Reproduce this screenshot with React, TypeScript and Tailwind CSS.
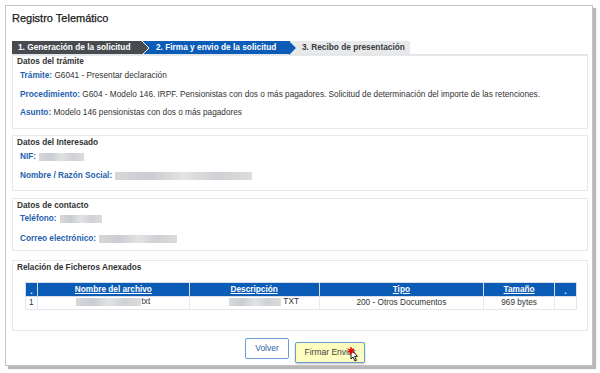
import React from "react";

const Blur = ({ w }: { w: number }) => (
  <span
    className="inline-block h-[8px] align-middle bg-[linear-gradient(90deg,#d8d8d8,#c9ccd2,#e2e2e2,#cfd1d5,#dcdcdc)] blur-[0.6px]"
    style={{ width: w }}
  />
);

export default function App() {
  const font = { fontFamily: '"Liberation Sans", Arial, sans-serif' };
  return (
    <div className="w-[600px] h-[373px] bg-white pt-[5px] pl-[5px]" style={font}>
      <div className="w-[588px] h-[361px] border border-[#c4c4c4] bg-white shadow-[3px_3px_1px_rgba(0,0,0,0.28)] flex flex-col pl-[6px] pr-[2px]">
        <div className="h-[35px] pt-[5px] text-[11px] leading-[14px] text-[#1a1a1a] [-webkit-text-stroke:0.25px_#1a1a1a]">Registro Telemático</div>
        {/* Steps */}
        <div className="flex h-[14px] border-b border-[#e4e4e4] mr-[2px] text-[8.3px] font-bold">
          <div className="bg-[#474a4f] text-white pl-[6px] w-[131px] flex items-center relative">
            1. Generación de la solicitud
            <svg className="absolute right-[-7px] top-0 z-10" width="8" height="14" viewBox="0 0 8 14">
              <polygon points="0,0 7,7 0,14" fill="#474a4f" />
              <polyline points="0,0 7,7 0,14" fill="none" stroke="#fff" strokeWidth="1" />
            </svg>
          </div>
          <div className="bg-[#0b5cb7] text-white pl-[13px] w-[147px] flex items-center relative">
            2. Firma y envio de la solicitud
            <svg className="absolute right-[-7px] top-0 z-10" width="8" height="14" viewBox="0 0 8 14">
              <polygon points="0,0 7,7 0,14" fill="#0b5cb7" />
            </svg>
          </div>
          <div className="bg-[#e8e9eb] text-[#3a3a3a] pl-[12px] w-[120px] flex items-center">
            3. Recibo de presentación
          </div>
        </div>

        {/* Datos del trámite */}
        <div className="border border-[#e6eaef] h-[74px] mr-[2px] px-[4px] pt-[1px] text-[8.25px] leading-[10px] text-[#333]">
          <div className="font-bold text-[#333]">Datos del trámite</div>
          <div className="pl-[3px] mt-[4px] whitespace-nowrap">
            <span className="font-bold text-[#1f5fae]">Trámite:</span> G6041 - Presentar declaración
          </div>
          <div className="pl-[3px] mt-[9px] whitespace-nowrap">
            <span className="font-bold text-[#1f5fae]">Procedimiento:</span> G604 - Modelo 146. IRPF. Pensionistas con dos o más pagadores. Solicitud de determinación del importe de las retenciones.
          </div>
          <div className="pl-[3px] mt-[8px] whitespace-nowrap">
            <span className="font-bold text-[#1f5fae]">Asunto:</span> Modelo 146 pensionistas con dos o más pagadores
          </div>
        </div>

        {/* Datos del interesado */}
        <div className="border border-[#e6eaef] h-[56px] mt-[6px] mr-[2px] px-[4px] pt-[2px] text-[8.25px] leading-[10px]">
          <div className="font-bold text-[#333]">Datos del Interesado</div>
          <div className="pl-[3px] mt-[4px] flex items-center gap-[3px]">
            <span className="font-bold text-[#1f5fae]">NIF:</span> <Blur w={45} />
          </div>
          <div className="pl-[3px] mt-[9px] flex items-center gap-[3px]">
            <span className="font-bold text-[#1f5fae]">Nombre / Razón Social:</span> <Blur w={137} />
          </div>
        </div>

        {/* Datos de contacto */}
        <div className="border border-[#e6eaef] h-[53px] mt-[7px] mr-[2px] px-[4px] pt-[2px] text-[8.25px] leading-[10px]">
          <div className="font-bold text-[#333]">Datos de contacto</div>
          <div className="pl-[3px] mt-[3px] flex items-center gap-[3px]">
            <span className="font-bold text-[#1f5fae]">Teléfono:</span> <Blur w={42} />
          </div>
          <div className="pl-[3px] mt-[10px] flex items-center gap-[3px]">
            <span className="font-bold text-[#1f5fae]">Correo electrónico:</span> <Blur w={78} />
          </div>
        </div>

        {/* Ficheros */}
        <div className="border border-[#e6eaef] h-[71px] mt-[9px] mr-[2px] px-[4px] pt-[2px] text-[8.25px] leading-[10px]">
          <div className="font-bold text-[#333]">Relación de Ficheros Anexados</div>
          <table className="ml-[8px] mt-[9px] w-[552px] border-collapse text-[8.25px] leading-[10px]">
            <thead>
              <tr className="bg-[#0b5cb7] text-white h-[14px]">
                <th className="w-[12px] border border-[#d8dee8] font-bold align-bottom leading-[9px]">.</th>
                <th className="w-[152px] border border-[#d8dee8] font-bold underline">Nombre del archivo</th>
                <th className="w-[130px] border border-[#d8dee8] font-bold underline">Descripción</th>
                <th className="w-[165px] border border-[#d8dee8] font-bold underline">Tipo</th>
                <th className="w-[71px] border border-[#d8dee8] font-bold underline">Tamaño</th>
                <th className="w-[22px] border border-[#d8dee8] font-bold align-bottom leading-[9px]">.</th>
              </tr>
            </thead>
            <tbody>
              <tr className="h-[13px] text-[#333]">
                <td className="border border-[#e4e8ee] pl-[3px]">1</td>
                <td className="border border-[#e4e8ee] text-center">
                  <span className="inline-flex items-center"><Blur w={65} />txt</span>
                </td>
                <td className="border border-[#e4e8ee] text-center">
                  <span className="inline-flex items-center gap-[2px] pl-[20px]"><Blur w={52} />TXT</span>
                </td>
                <td className="border border-[#e4e8ee] text-center">200 - Otros Documentos</td>
                <td className="border border-[#e4e8ee] text-center">969 bytes</td>
                <td className="border border-[#e4e8ee]"></td>
              </tr>
            </tbody>
          </table>
        </div>

        {/* Buttons */}
        <div className="flex justify-center gap-[6px] mt-[7px] pl-[8px]">
          <button className="w-[44px] h-[21px] border border-[#6a9bd4] rounded-[2px] bg-white text-[#1f5fae] text-[8.5px]">Volver</button>
          <div className="relative">
            <button className="w-[70px] h-[21px] border border-[#6a9bd4] rounded-[2px] bg-[#fdfdc0] text-[#444] text-[8.5px] shadow-[0_1px_2px_rgba(0,0,0,0.25)]">Firmar Enviar</button>
            <svg className="absolute left-[52px] top-[9px]" width="14" height="18" viewBox="0 0 14 18">
              <path d="M4 2 L4 12 L6 10 L8 14 L9.5 13.3 L7.6 9.4 L10.5 9.4 Z" fill="#fff" stroke="#000" strokeWidth="0.9" strokeLinejoin="round" />
              <path d="M1 2 L7 6 M4 0 L4 7 M1 5 L7 2" stroke="#e00" strokeWidth="1.4" />
            </svg>
          </div>
        </div>
      </div>
    </div>
  );
}
